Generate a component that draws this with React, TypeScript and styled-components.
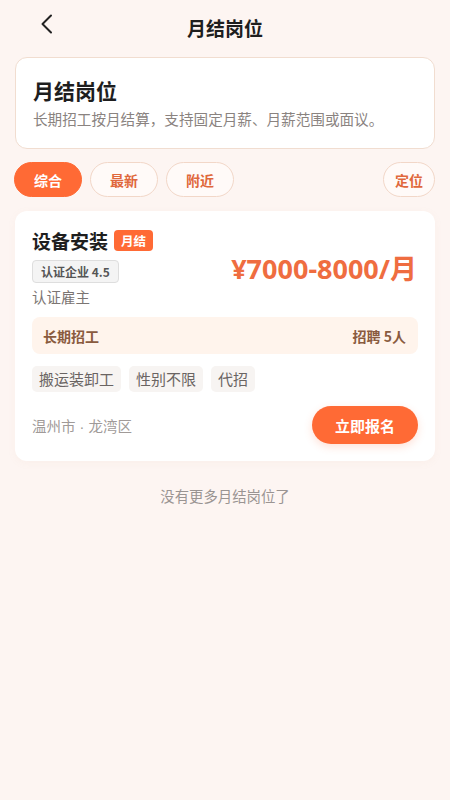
import React from "react";
import styled, { createGlobalStyle } from "styled-components";

const Global = createGlobalStyle`
  html, body { margin: 0; padding: 0; background: #fdf5f2; }
  body { font-family: "Noto Sans CJK SC", "Noto Sans", sans-serif; }
  * { box-sizing: border-box; }
`;

const Page = styled.div`
  min-height: 800px;
  background: #fdf5f2;
  padding: 0 15px 40px;
`;

const Header = styled.header`
  height: 57px;
  display: flex;
  align-items: center;
  justify-content: center;
  position: relative;
`;

const Back = styled.button`
  position: absolute;
  left: 21px;
  top: 12px;
  width: 20px;
  height: 24px;
  border: 0;
  background: none;
  padding: 0;
  display: flex;
  align-items: center;
  justify-content: center;
`;

const Title = styled.h1`
  margin: 0;
  font-size: 19px;
  line-height: 24px;
  font-weight: 700;
  color: #1e1e1e;
  transform: translateY(-1px);
`;

const IntroCard = styled.section`
  background: #fff;
  border: 1px solid #f1ddd0;
  border-radius: 12px;
  padding: 16px 17px 18px;
  display: flex;
  flex-direction: column;
  gap: 2px;
`;

const IntroTitle = styled.h2`
  margin: 0;
  font-size: 21px;
  line-height: 32px;
  font-weight: 700;
  color: #1e1e1e;
`;

const IntroText = styled.p`
  margin: 0;
  font-size: 14.6px;
  line-height: 22px;
  color: #8a8380;
`;

const Filters = styled.div`
  display: flex;
  gap: 8px;
  margin: 13px 0 14px -1px;
`;

const Chip = styled.button<{ $active?: boolean; $push?: boolean }>`
  height: 35px;
  padding: 0 ${(p) => (p.$push ? "11px" : "19px")};
  border-radius: 18px;
  border: 1px solid ${(p) => (p.$active ? "#ff6a35" : "#f2d7c8")};
  background: ${(p) => (p.$active ? "#ff6a35" : "#fffaf8")};
  color: ${(p) => (p.$active ? "#fff" : "#e0683c")};
  font-family: inherit;
  font-size: 14px;
  font-weight: 700;
  margin-left: ${(p) => (p.$push ? "auto" : "0")};
`;

const JobCard = styled.article`
  background: #fff;
  border-radius: 12px;
  padding: 18px 17px 17px;
  box-shadow: 0 2px 8px rgba(200, 150, 120, 0.06);
`;

const TopRow = styled.div`
  display: flex;
  align-items: center;
  justify-content: space-between;
`;

const LeftCol = styled.div`
  display: flex;
  flex-direction: column;
  align-items: flex-start;
`;

const NameRow = styled.div`
  display: flex;
  align-items: center;
  gap: 6px;
  height: 24px;
`;

const JobName = styled.h3`
  margin: 0;
  font-size: 19px;
  line-height: 24px;
  font-weight: 700;
  color: #1e1e1e;
`;

const PayTag = styled.span`
  background: #ff6a35;
  color: #fff;
  font-size: 12.5px;
  font-weight: 700;
  padding: 0 7px;
  height: 21px;
  line-height: 21px;
  border-radius: 4px;
  transform: translateY(-1px);
`;

const Badge = styled.span`
  margin-top: 7px;
  background: #f4f4f4;
  border: 1px solid #dedede;
  border-radius: 4px;
  font-size: 12px;
  font-weight: 700;
  color: #555;
  height: 23px;
  line-height: 21px;
  padding: 0 8px;
`;

const Employer = styled.span`
  margin-top: 3px;
  font-size: 14.5px;
  line-height: 22px;
  color: #7b7573;
`;

const Price = styled.div`
  font-size: 27px;
  line-height: 36px;
  font-weight: 700;
  color: #ef6d40;
  font-family: "Noto Sans", "Noto Sans CJK SC", sans-serif;
  margin-right: 1px;
`;

const InfoBar = styled.div`
  margin-top: 9px;
  background: #fff4ec;
  border-radius: 8px;
  height: 37px;
  display: flex;
  align-items: center;
  justify-content: space-between;
  padding: 0 12px 0 11px;
  font-size: 14px;
  font-weight: 700;
  color: #8a5b3f;
`;

const Tags = styled.div`
  display: flex;
  gap: 8px;
  margin-top: 12px;
`;

const Tag = styled.span`
  background: #f7f4f2;
  border-radius: 5px;
  height: 26px;
  line-height: 26px;
  padding: 0 7px;
  font-size: 15px;
  color: #6a6462;
`;

const Footer = styled.div`
  display: flex;
  align-items: center;
  justify-content: space-between;
  margin-top: 14px;
  height: 38px;
`;

const Location = styled.span`
  font-family: "Liberation Sans", "Noto Sans CJK SC", sans-serif;
  font-size: 14.5px;
  color: #a09a98;
`;

const Apply = styled.button`
  width: 106px;
  height: 38px;
  border: 0;
  border-radius: 19px;
  background: #ff6a35;
  color: #fff;
  font-family: inherit;
  font-size: 15px;
  font-weight: 700;
  box-shadow: 0 3px 8px rgba(255, 106, 53, 0.2);
`;

const EndNote = styled.p`
  margin: 25px 0 0;
  text-align: center;
  font-size: 14.4px;
  line-height: 20px;
  color: #9a9492;
`;

export default function App() {
  return (
    <>
      <Global />
      <Page>
        <Header>
          <Back aria-label="返回">
            <svg width="14" height="20" viewBox="0 0 14 20" fill="none">
              <path d="M12 1.5 L3.5 10 L12 18.5" stroke="#222" strokeWidth="2" strokeLinecap="round" strokeLinejoin="round" />
            </svg>
          </Back>
          <Title>月结岗位</Title>
        </Header>
        <IntroCard>
          <IntroTitle>月结岗位</IntroTitle>
          <IntroText>长期招工按月结算，支持固定月薪、月薪范围或面议。</IntroText>
        </IntroCard>
        <Filters>
          <Chip $active>综合</Chip>
          <Chip>最新</Chip>
          <Chip>附近</Chip>
          <Chip $push>定位</Chip>
        </Filters>
        <JobCard>
          <TopRow>
            <LeftCol>
              <NameRow>
                <JobName>设备安装</JobName>
                <PayTag>月结</PayTag>
              </NameRow>
              <Badge>认证企业 4.5</Badge>
              <Employer>认证雇主</Employer>
            </LeftCol>
            <Price>¥7000-8000/月</Price>
          </TopRow>
          <InfoBar>
            <span>长期招工</span>
            <span>招聘 5人</span>
          </InfoBar>
          <Tags>
            <Tag>搬运装卸工</Tag>
            <Tag>性别不限</Tag>
            <Tag>代招</Tag>
          </Tags>
          <Footer>
            <Location>温州市 · 龙湾区</Location>
            <Apply>立即报名</Apply>
          </Footer>
        </JobCard>
        <EndNote>没有更多月结岗位了</EndNote>
      </Page>
    </>
  );
}
